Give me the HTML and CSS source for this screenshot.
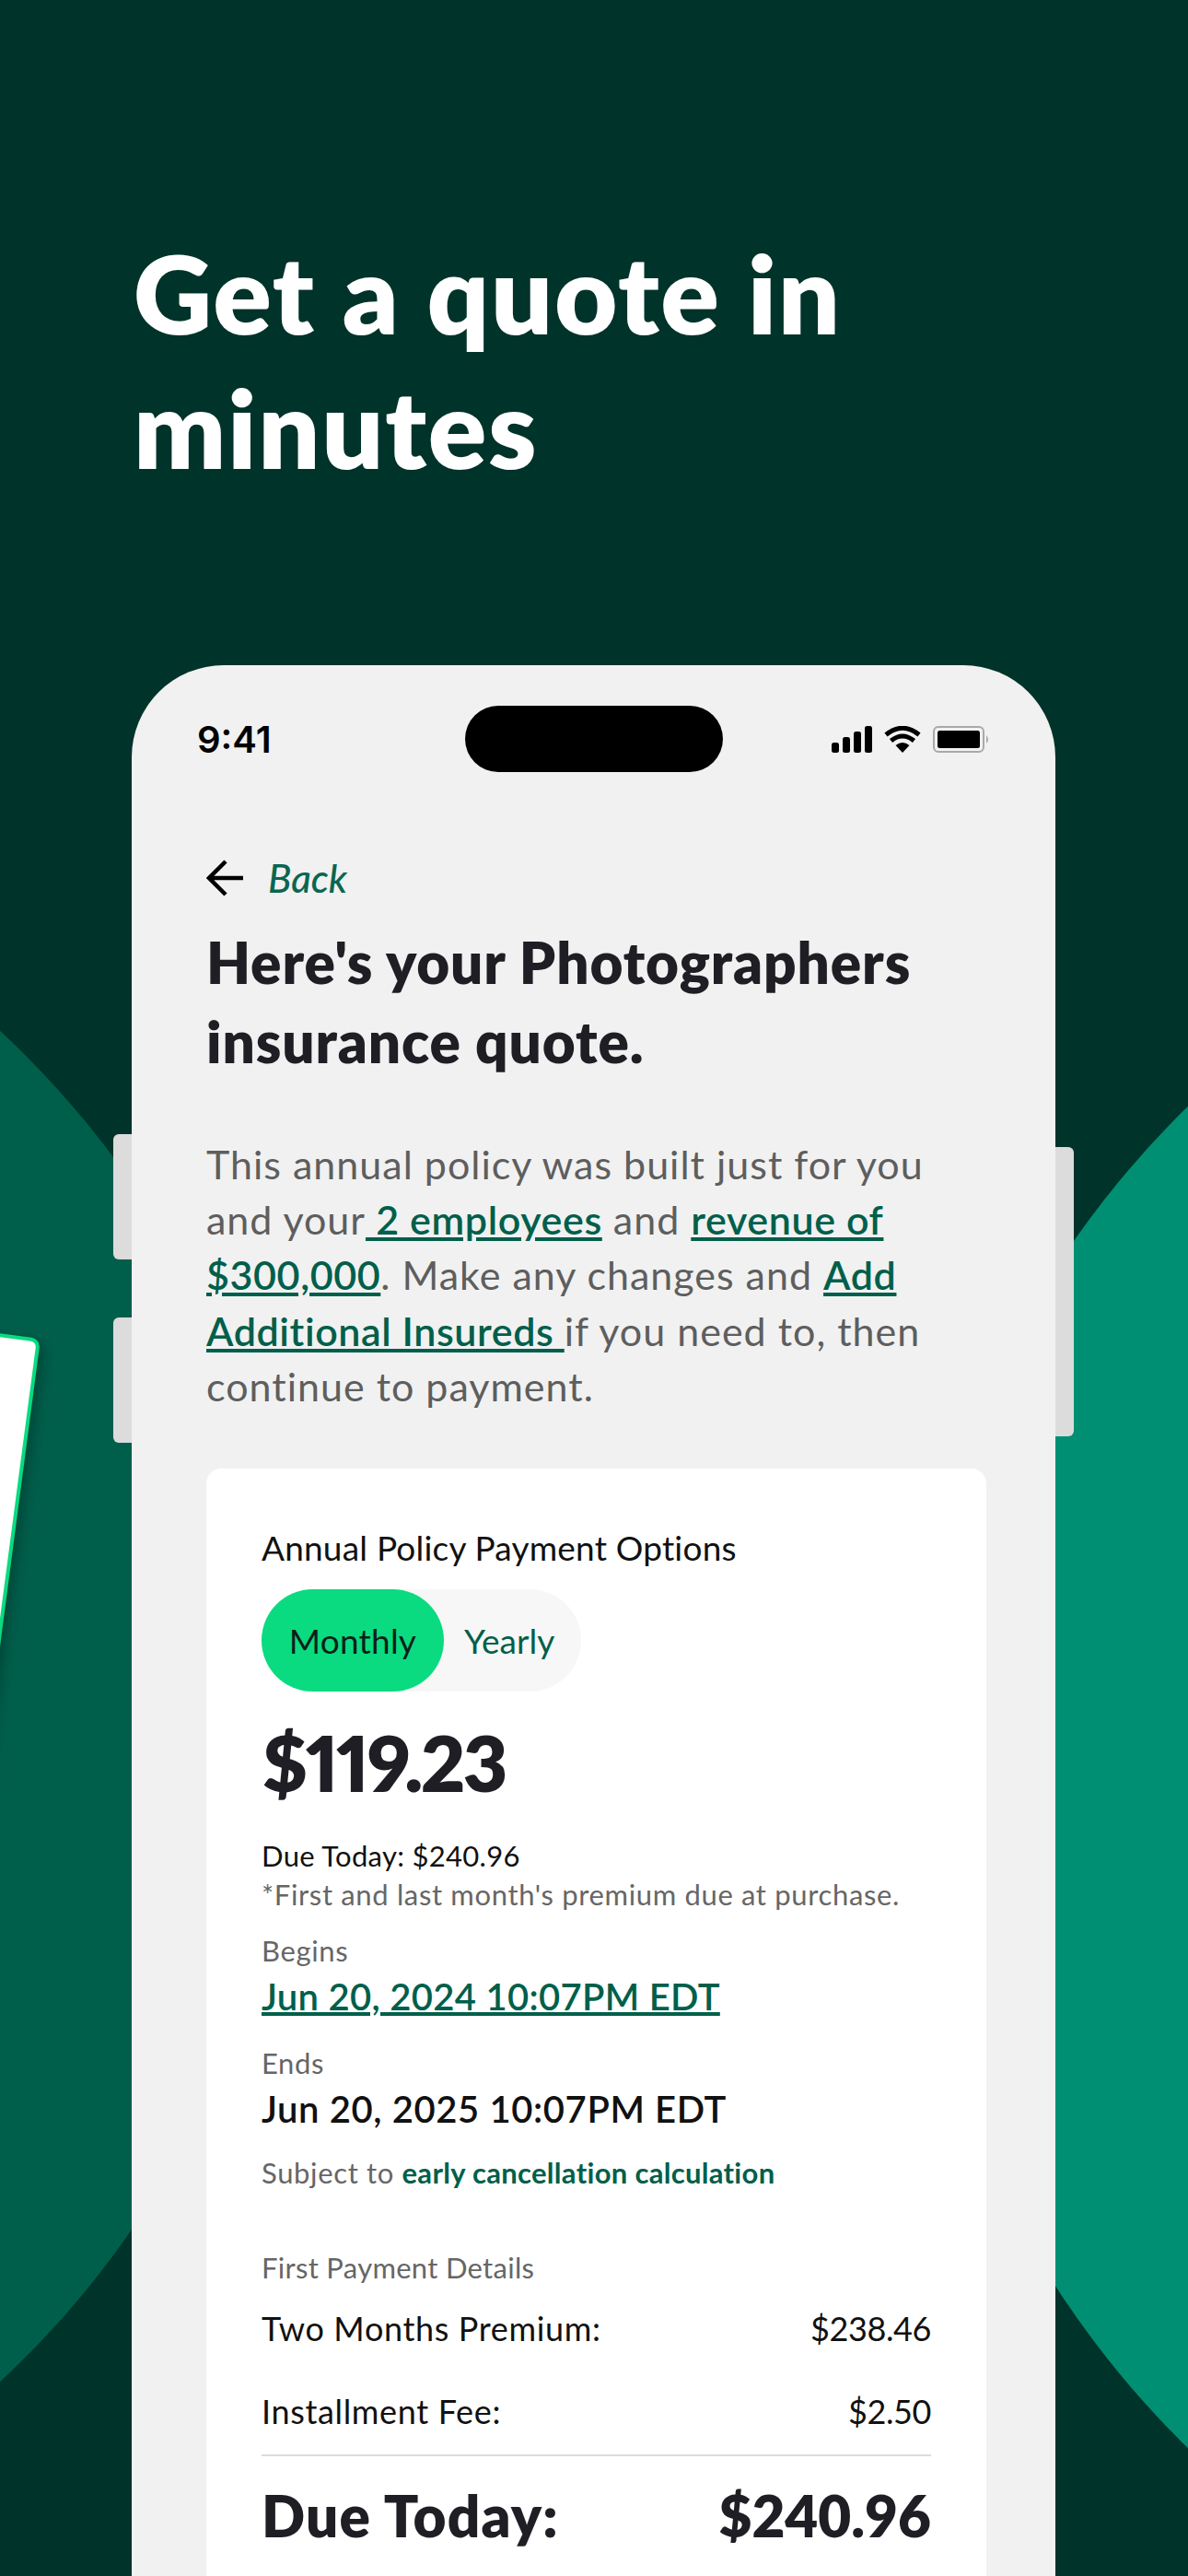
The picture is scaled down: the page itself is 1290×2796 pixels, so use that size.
FILE: index.html
```html
<!DOCTYPE html>
<html lang="en">
<head>
    <meta charset="UTF-8">
    <meta name="viewport" content="width=device-width, initial-scale=1.0">
    <title>Get a quote in minutes</title>
    <link rel="stylesheet" href="styles.css">
</head>
<body>
    <div class="page">
        <!-- Background shapes -->
        <div class="blob blob-left"></div>
        <div class="blob blob-right"></div>
        <div class="tilted-card"></div>

        <h1 class="hero-title">Get a quote in<br>minutes</h1>

        <div class="phone">
            <span class="side-btn side-left-1"></span>
            <span class="side-btn side-left-2"></span>
            <span class="side-btn side-right"></span>

            <div class="status-bar">
                <span class="status-time">9:41</span>
                <span class="island"></span>
                <div class="status-icons">
                    <svg width="44" height="29" viewBox="0 0 44 29">
                        <rect x="0" y="18" width="8" height="11" rx="2.5"/>
                        <rect x="12" y="12" width="8" height="17" rx="2.5"/>
                        <rect x="24" y="6" width="8" height="23" rx="2.5"/>
                        <rect x="36" y="0" width="8" height="29" rx="2.5"/>
                    </svg>
                    <svg width="40" height="29" viewBox="0 0 40 29">
                        <path d="M20 29 L12.5 21 Q20 15 27.500 21 Z"/>
                        <path d="M7.500 16 Q20 6 32.500 16" fill="none" stroke="#000" stroke-width="5"/>
                        <path d="M2 9.500 Q20 -5 38 9.500" fill="none" stroke="#000" stroke-width="5"/>
                    </svg>
                    <svg width="62" height="29" viewBox="0 0 62 29">
                        <rect x="1" y="1" width="54" height="27" rx="5" fill="none" stroke="#a9a9a9" stroke-width="2"/>
                        <rect x="5" y="5" width="46" height="19" rx="2.500"/>
                        <path d="M58 10 Q62 14.500 58 19 Z" fill="#a9a9a9"/>
                    </svg>
                </div>
            </div>

            <div class="back-row">
                <svg width="42" height="40" viewBox="0 0 42 40">
                    <path d="M40 20 H3 M21 2 L3 20 L21 38" fill="none" stroke="#000" stroke-width="4.500"/>
                </svg>
                <span class="back-text">Back</span>
            </div>

            <h2 class="quote-title">Here's your Photographers<br>insurance quote.</h2>

            <p class="intro">This annual policy was built just for you<br>and your<a href="#"> 2 employees</a> and <a href="#">revenue of<br>$300,000</a>. Make any changes and <a href="#">Add<br>Additional Insureds </a>if you need to, then<br>continue to payment.</p>

            <div class="card">
                <div class="options-label">Annual Policy Payment Options</div>
                <div class="toggle">
                    <span class="toggle-on">Monthly</span>
                    <span class="toggle-off">Yearly</span>
                </div>
                <div class="price">$119.23</div>
                <div class="due-small">Due Today: $240.96</div>
                <div class="note">*First and last month's premium due at purchase.</div>
                <div class="note begins">Begins</div>
                <a href="#" class="date date-link">Jun 20, 2024 10:07PM EDT</a>
                <div class="note ends">Ends</div>
                <div class="date">Jun 20, 2025 10:07PM EDT</div>
                <div class="note subject">Subject to <a href="#">early cancellation calculation</a></div>
                <div class="note details">First Payment Details</div>
                <div class="row row-first"><span>Two Months Premium:</span><span>$238.46</span></div>
                <div class="row row-second"><span>Installment Fee:</span><span>$2.50</span></div>
                <div class="divider"></div>
                <div class="total"><span>Due Today:</span><span>$240.96</span></div>
            </div>
        </div>
    </div>
</body>
</html>
```
FILE: styles.css
```css
body {
    margin: 0;
    font-family: "Lato", "Open Sans", sans-serif;
}
.page {
    position: relative;
    width: 1290px;
    height: 2796px;
    overflow: hidden;
    background-color: #00332a;
    padding-top: 245px;
    box-sizing: border-box;
}
.blob {
    position: absolute;
    border-radius: 50%;
}
.blob-left {
    left: -1680px;
    top: 852px;
    width: 2000px;
    height: 2000px;
    background-color: #005f4b;
}
.blob-right {
    left: 983px;
    top: 912px;
    width: 2034px;
    height: 2034px;
    background-color: #008f73;
}
.tilted-card {
    position: absolute;
    left: -556px;
    top: 1453px;
    width: 600px;
    height: 900px;
    box-sizing: border-box;
    background-color: white;
    border: 4px solid #0adb80;
    border-radius: 10px;
    transform: rotate(7.5deg);
    transform-origin: top right;
    box-shadow: 6px 4px 14px rgba(0,0,0,0.25);
}
.hero-title {
    position: relative;
    margin: 0 0 185px 145px;
    font-size: 118px;
    line-height: 146px;
    font-weight: 800;
    letter-spacing: 1.7px;
    color: white;
}
.phone {
    position: relative;
    width: 1003px;
    height: 2074px;
    margin-left: 143px;
    padding: 44px 75px 0 81px;
    box-sizing: border-box;
    background-color: #f1f1f1;
    border-radius: 100px 100px 0 0;
}
.side-btn {
    position: absolute;
    width: 20px;
    background-color: #dcdcdc;
}
.side-left-1, .side-left-2 {
    left: -20px;
    height: 136px;
    border-radius: 6px 0 0 6px;
}
.side-left-1 { top: 509px; }
.side-left-2 { top: 708px; }
.side-right {
    right: -20px;
    top: 523px;
    height: 314px;
    border-radius: 0 6px 6px 0;
}
.status-bar {
    display: grid;
    grid-template-columns: 1fr auto 1fr;
    align-items: center;
    height: 72px;
    margin: 0 -4px 0 -10px;
}
.status-time {
    font-family: "Inter", "Liberation Sans", sans-serif;
    font-weight: 600;
    font-size: 40px;
    color: #000;
}
.island {
    width: 280px;
    height: 72px;
    background-color: #000;
    border-radius: 36px;
}
.status-icons {
    display: flex;
    justify-content: flex-end;
    gap: 13px;
}
.back-row {
    display: flex;
    align-items: center;
    gap: 25px;
    height: 40px;
    margin-top: 95px;
}
.back-text {
    font-style: italic;
    font-size: 42px;
    font-weight: 500;
    color: #0a6650;
}
.quote-title {
    margin: 28px 0 0 0;
    font-size: 62px;
    line-height: 86px;
    font-weight: 800;
    letter-spacing: 0.9px;
    color: #1f1e24;
}
.intro {
    margin: 61px 0 0 0;
    font-size: 43px;
    line-height: 60.200px;
    letter-spacing: 1px;
    color: #5e5e5e;
}
.intro a {
    color: #005f4b;
    font-weight: 600;
    letter-spacing: 0.6px;
}
.card {
    margin-top: 59px;
    padding: 64px 60px 0 60px;
    height: 1300px;
    box-sizing: border-box;
    background-color: white;
    border-radius: 16px;
}
.options-label {
    font-size: 37px;
    line-height: 44px;
    letter-spacing: 0.2px;
    color: #111;
}
.toggle {
    display: flex;
    align-items: center;
    width: 347px;
    height: 111px;
    margin-top: 23px;
    background-color: #f7f7f7;
    border-radius: 56px;
}
.toggle-on {
    display: flex;
    align-items: center;
    justify-content: center;
    width: 198px;
    height: 111px;
    background-color: #0adb80;
    border-radius: 56px;
    font-size: 37px;
    letter-spacing: 0.2px;
    color: #0b1f1a;
}
.toggle-off {
    margin-left: 22px;
    font-size: 37px;
    color: #005f4b;
}
.price {
    margin-top: 32px;
    font-size: 84px;
    line-height: 90px;
    font-weight: 800;
    letter-spacing: -2.6px;
    font-variant-numeric: proportional-nums;
    color: #1f1e24;
}
.due-small {
    margin-top: 36px;
    font-size: 31px;
    line-height: 40px;
    letter-spacing: 0.3px;
    color: #111;
}
.note {
    margin-top: 2px;
    font-size: 31px;
    line-height: 40px;
    letter-spacing: 0.65px;
    color: #666;
}
.note.begins { margin-top: 21px; }
.note.ends { margin-top: 27px; }
.note.subject { margin-top: 24px; }
.note.details {
    margin-top: 63px;
    letter-spacing: 0.3px;
}
.note a {
    color: #005f4b;
    font-weight: 700;
    letter-spacing: 0.3px;
    text-decoration: none;
}
.date {
    display: block;
    margin-top: 5px;
    font-size: 40px;
    line-height: 50px;
    font-weight: 600;
    letter-spacing: 0.6px;
    color: #111;
}
.date-link {
    color: #005f4b;
    letter-spacing: 0.3px;
}
.row {
    display: flex;
    justify-content: space-between;
    font-size: 36px;
    line-height: 44px;
    letter-spacing: 0.65px;
    color: #111;
}
.row span:last-child {
    letter-spacing: -0.4px;
}
.row-first { margin-top: 24px; }
.row-second { margin-top: 46px; }
.divider {
    height: 2px;
    margin-top: 25px;
    background-color: #dcdcdc;
}
.total {
    display: flex;
    justify-content: space-between;
    margin-top: 29px;
    font-size: 62px;
    line-height: 70px;
    font-weight: 800;
    letter-spacing: 1.2px;
    color: #1f1e24;
}
.total span:last-child {
    letter-spacing: 0;
}
```
